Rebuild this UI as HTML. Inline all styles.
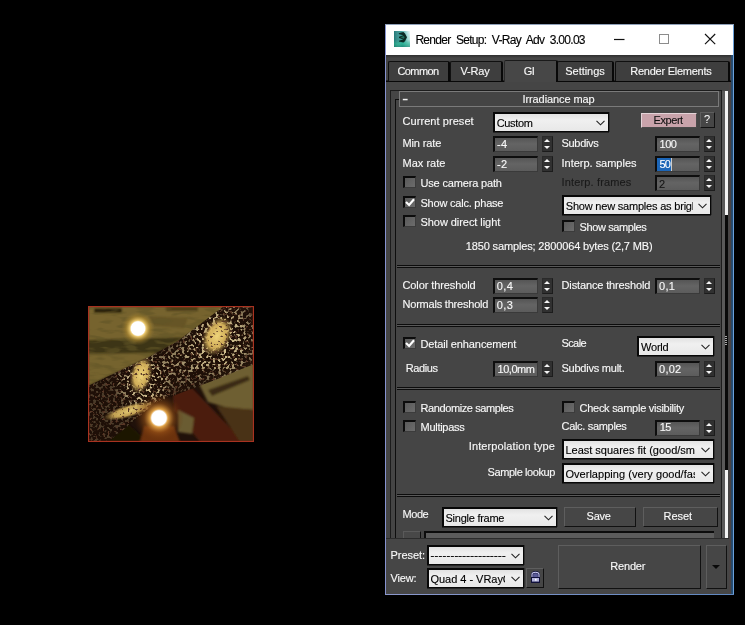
<!DOCTYPE html>
<html><head><meta charset="utf-8"><title>Render Setup: V-Ray Adv 3.00.03</title>
<style>
html,body{margin:0;padding:0;background:#000;}
body{width:745px;height:625px;position:relative;overflow:hidden;font-family:"Liberation Sans",sans-serif;}
.a{position:absolute;box-sizing:border-box;}
.t{position:absolute;white-space:nowrap;line-height:20px;height:20px;-webkit-text-stroke:0.13px currentColor;}
#txt{position:absolute;left:0;top:0;width:745px;height:625px;will-change:transform;}
#win{left:385px;top:24px;width:349px;height:571px;background:#454545;}
#title{left:386px;top:25px;width:347px;height:30px;background:#fff;}
.fld{width:45px;height:16px;background:linear-gradient(#555,#646464 45%,#5c5c5c);border:1px solid #3a3a3a;border-top:2px solid #0e0e0e;border-left:2px solid #0e0e0e;}
.spn{width:11px;height:16px;background:#303030;border:1px solid #2a2a2a;border-right-color:#1c1c1c;border-bottom-color:#1c1c1c;}
.spn:before{content:"";position:absolute;left:0.5px;top:2px;border:3px solid transparent;border-top:none;border-bottom:3px solid #f4f4f4;width:0;height:0;}
.spn:after{content:"";position:absolute;left:0.5px;top:9px;border:3px solid transparent;border-bottom:none;border-top:3px solid #f4f4f4;width:0;height:0;}
.dd{background:linear-gradient(#e2e2e2,#f0f0f0 35%,#e8e8e8);border:solid #080808;border-width:2px 1px 1px 2px;box-shadow:0 1px 0 rgba(0,0,0,.45),1px 0 0 rgba(0,0,0,.3);}
.dd svg{position:absolute;right:3px;top:50%;margin-top:-2.5px;}
.cb{width:13px;height:12px;background:linear-gradient(135deg,#5a5a5a,#6c6c6c);border:1px solid #3c3c3c;border-top:2px solid #0c0c0c;border-left:2px solid #0c0c0c;}
.btn{background:#464646;border:1px solid #111;border-top-color:#5e5e5e;border-left-color:#5e5e5e;}
.sep{height:3px;border-top:1px solid #0c0c0c;border-bottom:1px solid #0c0c0c;background:#585858;left:397px;width:323px;}
.tab{background:#3e3e3e;border:1px solid #101010;border-right:2px solid #080808;border-bottom:none;border-radius:2px 2px 0 0;top:61px;height:20px;}
</style></head><body>
<svg class="a" style="left:88px;top:306px" width="166" height="136" viewBox="0 0 166 136">
<defs>
<filter id="b2" x="-20%" y="-20%" width="140%" height="140%"><feGaussianBlur stdDeviation="1.3"/></filter>
<filter id="b3" x="-30%" y="-30%" width="160%" height="160%"><feGaussianBlur stdDeviation="2.5"/></filter>
<filter id="spk" x="0" y="0" width="100%" height="100%">
<feTurbulence type="fractalNoise" baseFrequency="0.36" numOctaves="1" seed="7" result="n"/>
<feColorMatrix in="n" type="matrix" values="0 0 0 0 0.72  0 0 0 0 0.60  0 0 0 0 0.32  12 0 0 0 -6.3"/>
</filter>
<filter id="spd" x="0" y="0" width="100%" height="100%">
<feTurbulence type="fractalNoise" baseFrequency="0.4" numOctaves="1" seed="23" result="n"/>
<feColorMatrix in="n" type="matrix" values="0 0 0 0 0.10  0 0 0 0 0.04  0 0 0 0 0.02  12 0 0 0 -7.4"/>
</filter>
<filter id="tex" x="0" y="0" width="100%" height="100%">
<feTurbulence type="fractalNoise" baseFrequency="0.06 0.22" numOctaves="2" seed="4" result="n"/>
<feColorMatrix in="n" type="matrix" values="0 0 0 0 0.12  0 0 0 0 0.09  0 0 0 0 0.02  5 0 0 0 -2.4"/>
</filter>
<radialGradient id="g1"><stop offset="0" stop-color="#fff"/><stop offset="0.4" stop-color="#fff"/><stop offset="0.48" stop-color="#f0cc70" stop-opacity="0.95"/><stop offset="0.72" stop-color="#b08a30" stop-opacity="0.55"/><stop offset="1" stop-color="#8a7030" stop-opacity="0"/></radialGradient>
<radialGradient id="g2"><stop offset="0" stop-color="#fff"/><stop offset="0.29" stop-color="#fff"/><stop offset="0.36" stop-color="#e8a848" stop-opacity="0.95"/><stop offset="0.6" stop-color="#9a5418" stop-opacity="0.55"/><stop offset="1" stop-color="#5a2808" stop-opacity="0"/></radialGradient>
<radialGradient id="gy"><stop offset="0" stop-color="#efd47a"/><stop offset="0.6" stop-color="#d8b45c" stop-opacity="0.95"/><stop offset="1" stop-color="#a08040" stop-opacity="0"/></radialGradient>
<radialGradient id="mg"><stop offset="0" stop-color="#fff"/><stop offset="0.5" stop-color="#fff" stop-opacity="0.8"/><stop offset="1" stop-color="#fff" stop-opacity="0"/></radialGradient>
<mask id="spm" maskUnits="userSpaceOnUse" x="0" y="0" width="166" height="136"><rect width="166" height="136" fill="#3c3c3c"/><ellipse cx="132" cy="34" rx="44" ry="48" fill="url(#mg)"/><ellipse cx="56" cy="76" rx="32" ry="36" fill="url(#mg)"/><ellipse cx="96" cy="58" rx="30" ry="26" fill="url(#mg)" opacity="0.6"/></mask>
<clipPath id="topc"><path d="M0 0 H140 L90 36 L60 52 L28 67 L0 80 Z"/></clipPath>
<clipPath id="ic"><rect x="0" y="0" width="166" height="136"/></clipPath>
<clipPath id="beam"><path d="M136 0 L166 0 L166 58 L127 74 L90 88 L66 98 L40 120 L20 136 L0 136 L0 80 L29 66 L61 51 L90 35 Z"/></clipPath>
</defs>
<g clip-path="url(#ic)">
<rect width="166" height="136" fill="#20110a"/>
<g filter="url(#b2)">
<!-- upper olive -->
<path d="M0 0 H140 L90 36 L60 52 L28 67 L0 80 Z" fill="#76642e"/>
<path d="M0 34 L96 31 L70 47 L0 48 Z" fill="#3d3612"/>
<path d="M6 2 H34 V7 H6 Z" fill="#2a200a"/>
<path d="M78 1 H110 V5 H78 Z" fill="#4a3a14"/>
<path d="M60 10 L100 12 L96 22 L66 20 Z" fill="#665426"/>
<path d="M0 50 L40 50 L30 66 L0 78 Z" fill="#74642f"/>
<!-- lower left dark -->
<path d="M0 110 L40 118 L60 136 L0 136 Z" fill="#1c1406"/>
<!-- beam 2 reddish -->
<path d="M84 78 L104 82 L156 136 L112 136 L86 104 Z" fill="#4c1e0c"/>
<!-- right olive -->
<path d="M110 76 L166 54 L166 104 L140 102 L120 96 Z" fill="#6e5f32"/>
<path d="M128 100 L166 104 L166 136 L152 136 Z" fill="#4a3012"/>
<path d="M120 84 L160 70 L162 74 L124 90 Z" fill="#3a2c12"/>
<!-- small olive bottom -->
<path d="M90 104 L106 112 L104 128 L90 126 Z" fill="#6a5c30"/>
<!-- orange below light -->
<path d="M56 120 L86 120 L92 136 L52 136 Z" fill="#6c300e"/>
</g>
<g clip-path="url(#topc)"><rect width="166" height="136" filter="url(#tex)" opacity="0.6"/></g>
<!-- speckled beam -->
<g clip-path="url(#beam)">
<rect width="166" height="136" fill="#1e0f07" opacity="0.93"/>
<g mask="url(#spm)"><rect width="166" height="136" filter="url(#spk)"/></g>
<ellipse cx="129" cy="30" rx="14" ry="21" fill="url(#gy)" transform="rotate(26 129 30)"/>
<ellipse cx="53" cy="69" rx="11" ry="19" fill="url(#gy)" transform="rotate(14 53 69)"/>
<ellipse cx="41" cy="105" rx="27" ry="6.5" fill="url(#gy)" transform="rotate(-16 41 105)" opacity="0.92"/>
<rect width="166" height="136" filter="url(#spd)"/>
</g>
<!-- lights -->
<circle cx="50" cy="22.5" r="17" fill="url(#g1)"/>
<circle cx="71" cy="112" r="25" fill="url(#g2)"/>
</g>
<rect x="0.5" y="0.5" width="165" height="135" fill="none" stroke="#a83220" stroke-width="1.3"/>
</svg>

<div class="a" id="win"></div>
<!-- window borders -->
<div class="a" style="left:385px;top:24px;width:1px;height:571px;background:#8592cf"></div>
<div class="a" style="left:729px;top:55px;width:2px;height:539px;background:#4a4444"></div>
<div class="a" style="left:731px;top:24px;width:2px;height:571px;background:linear-gradient(90deg,#2c4660,#23517e)"></div>
<div class="a" style="left:733px;top:24px;width:1px;height:571px;background:#6ba0d8"></div>
<div class="a" style="left:385px;top:594px;width:349px;height:1px;background:linear-gradient(90deg,#8c98cc,#5f88c0)"></div>
<div class="a" id="title"></div>
<div class="a" style="left:385px;top:24px;width:349px;height:1px;background:#8fa0b8"></div>
<!-- icon -->
<svg class="a" style="left:394px;top:31px" width="16" height="16" viewBox="0 0 16 16">
<defs><linearGradient id="ig" x1="0" y1="0.2" x2="1" y2="0"><stop offset="0" stop-color="#2a7c84"/><stop offset="0.45" stop-color="#3c9c98"/><stop offset="0.8" stop-color="#a8dcdc"/><stop offset="1" stop-color="#e8f6f6"/></linearGradient>
<linearGradient id="ig2" x1="0" y1="0" x2="0" y2="1"><stop offset="0" stop-color="#20a888" stop-opacity="0"/><stop offset="0.55" stop-color="#20a888" stop-opacity="0.15"/><stop offset="0.8" stop-color="#28b494" stop-opacity="0.9"/><stop offset="1" stop-color="#1c8c78" stop-opacity="0.95"/></linearGradient>
<linearGradient id="ig3" x1="0" y1="0" x2="1" y2="0"><stop offset="0" stop-color="#106858" stop-opacity="0.7"/><stop offset="0.5" stop-color="#fff" stop-opacity="0"/><stop offset="1" stop-color="#fff" stop-opacity="0.45"/></linearGradient></defs>
<rect width="16" height="16" fill="url(#ig)"/>
<rect width="16" height="16" fill="url(#ig2)"/>
<rect y="0" width="16" height="16" fill="url(#ig3)" opacity="0.45"/>
<path d="M4.6 2.2 L9.4 1 L11 2.4 L13 6.3 L11 10.2 L9.4 11.6 L4.8 10.4 L5.4 9.4 L9.2 8.6 L5 6.9 L5 5.8 L9.2 4.2 L5.2 3.2 Z" fill="#0a2a24"/>
<path d="M6.4 6.3 L9.6 5 L10.6 6.3 L9.6 7.7 Z" fill="#1c6c58"/>
</svg>
<!-- window controls -->
<svg class="a" style="left:600px;top:25px" width="133" height="30" viewBox="0 0 133 30">
<path d="M14 14.5 H24.5" stroke="#111" stroke-width="1.2" fill="none"/>
<rect x="59.5" y="9.5" width="9" height="9" stroke="#8c8c8c" stroke-width="1" fill="none"/>
<path d="M105 9 L115.2 19.2 M115.2 9 L105 19.2" stroke="#111" stroke-width="1.15" fill="none"/>
</svg>
<!-- dark strip below title -->
<div class="a" style="left:386px;top:55px;width:345px;height:3px;background:linear-gradient(#2e2e2e,#454545)"></div>
<!-- tabs -->
<div class="a" style="left:386px;top:80px;width:345px;height:2px;background:linear-gradient(#262626 50%,#080808 50%)"></div>
<div class="a tab" style="left:388px;width:62px"></div>
<div class="a tab" style="left:450px;width:53px"></div>
<div class="a tab" style="left:557px;width:57px"></div>
<div class="a tab" style="left:615px;width:115px"></div>
<div class="a tab" style="left:504px;width:54px;top:60px;height:22px;background:#474747;border-top-color:#1a1a1a;border-left-color:#2a2a2a"></div>
<!-- panel frame -->
<div class="a" style="left:390px;top:90px;width:332px;height:450px;border:1px solid #1c1c1c;border-bottom:none;"></div>
<div class="a" style="left:395px;top:99px;width:1px;height:441px;background:#0e0e0e"></div>
<div class="a" style="left:395px;top:99px;width:4px;height:1px;background:#0e0e0e"></div>
<!-- rollout header -->
<div class="a" style="left:399px;top:91px;width:320px;height:16px;border:1px solid #7a7a7a;background:#444"></div>
<svg class="a" style="left:400px;top:95px" width="12" height="10"><rect x="2.8" y="3.8" width="4.8" height="1.5" fill="#f0f0f0"/></svg>
<!-- scroll strip -->
<div class="a" style="left:722px;top:91px;width:3px;height:449px;background:#5a5a5a"></div>
<div class="a" style="left:725px;top:91px;width:3px;height:449px;background:#0a0a0a"></div>
<div class="a" style="left:725px;top:91px;width:3px;height:124px;background:#f4f4f4"></div>
<div class="a" style="left:725px;top:470px;width:3px;height:69px;background:#f4f4f4"></div>
<div class="a" style="left:725px;top:336px;width:2px;height:1px;background:#a8a8a8"></div><div class="a" style="left:725px;top:338px;width:2px;height:1px;background:#a8a8a8"></div><div class="a" style="left:725px;top:340px;width:2px;height:1px;background:#a8a8a8"></div><div class="a" style="left:725px;top:342px;width:2px;height:1px;background:#a8a8a8"></div><div class="a" style="left:725px;top:344px;width:2px;height:1px;background:#a8a8a8"></div>
<!-- row1 -->
<div class="a dd" style="left:493px;top:112px;width:116px;height:20px"><svg width="9" height="6" viewBox="0 0 9 6"><path d="M0.5 0.8 L4.5 4.8 L8.5 0.8" stroke="#222" stroke-width="1.1" fill="none"/></svg></div>
<div class="a" style="left:641px;top:113px;width:56px;height:15px;background:#c9a3ab;border:1px solid #e4d4d8;border-right-color:#4a4a4a;border-bottom-color:#4a4a4a"></div>
<div class="a btn" style="left:700px;top:112px;width:15px;height:16px"></div>
<!-- spinners rows -->
<div class="a fld" style="left:493px;top:136px"></div><div class="a spn" style="left:542px;top:136px"></div>
<div class="a fld" style="left:493px;top:156px"></div><div class="a spn" style="left:542px;top:156px"></div>
<div class="a fld" style="left:655px;top:136px"></div><div class="a spn" style="left:704px;top:136px"></div>
<div class="a fld" style="left:655px;top:156px"></div><div class="a spn" style="left:704px;top:156px"></div>
<div class="a" style="left:657px;top:158px;width:14px;height:13px;background:#1c66b8"></div>
<div class="a" style="left:671px;top:158px;width:1px;height:13px;background:#ccc"></div>
<div class="a fld" style="left:655px;top:175px"></div><div class="a spn" style="left:704px;top:175px"></div>
<!-- checkboxes -->
<div class="a cb" style="left:403px;top:176px"></div>
<div class="a cb" style="left:403px;top:196px"></div>
<svg class="a" style="left:403px;top:196px" width="13" height="12" viewBox="0 0 13 12"><path d="M3 5.9 L6.1 9 L11 3.2" stroke="#fff" stroke-width="2.1" fill="none"/></svg>
<div class="a cb" style="left:403px;top:215px"></div>
<div class="a cb" style="left:562px;top:220px"></div>
<div class="a dd" style="left:562px;top:195px;width:149px;height:20px"><svg width="9" height="6" viewBox="0 0 9 6"><path d="M0.5 0.8 L4.5 4.8 L8.5 0.8" stroke="#222" stroke-width="1.1" fill="none"/></svg></div>
<div class="a sep" style="top:265px"></div>
<!-- thresholds -->
<div class="a fld" style="left:493px;top:278px"></div><div class="a spn" style="left:542px;top:278px"></div>
<div class="a fld" style="left:655px;top:278px"></div><div class="a spn" style="left:704px;top:278px"></div>
<div class="a fld" style="left:493px;top:297px"></div><div class="a spn" style="left:542px;top:297px"></div>
<div class="a sep" style="top:324px"></div>
<!-- detail enhancement -->
<div class="a cb" style="left:403px;top:337px"></div>
<svg class="a" style="left:403px;top:337px" width="13" height="12" viewBox="0 0 13 12"><path d="M3 5.9 L6.1 9 L11 3.2" stroke="#fff" stroke-width="2.1" fill="none"/></svg>
<div class="a dd" style="left:637px;top:336px;width:77px;height:20px"><svg width="9" height="6" viewBox="0 0 9 6"><path d="M0.5 0.8 L4.5 4.8 L8.5 0.8" stroke="#222" stroke-width="1.1" fill="none"/></svg></div>
<div class="a fld" style="left:493px;top:361px"></div><div class="a spn" style="left:542px;top:361px"></div>
<div class="a fld" style="left:655px;top:361px"></div><div class="a spn" style="left:704px;top:361px"></div>
<div class="a sep" style="top:387px"></div>
<!-- options -->
<div class="a cb" style="left:403px;top:401px"></div>
<div class="a cb" style="left:562px;top:401px"></div>
<div class="a cb" style="left:403px;top:420px"></div>
<div class="a fld" style="left:655px;top:420px"></div><div class="a spn" style="left:704px;top:420px"></div>
<div class="a dd" style="left:562px;top:439px;width:152px;height:20px"><svg width="9" height="6" viewBox="0 0 9 6"><path d="M0.5 0.8 L4.5 4.8 L8.5 0.8" stroke="#222" stroke-width="1.1" fill="none"/></svg></div>
<div class="a dd" style="left:562px;top:463px;width:152px;height:20px"><svg width="9" height="6" viewBox="0 0 9 6"><path d="M0.5 0.8 L4.5 4.8 L8.5 0.8" stroke="#222" stroke-width="1.1" fill="none"/></svg></div>
<div class="a sep" style="top:494px"></div>
<!-- mode -->
<div class="a dd" style="left:442px;top:507px;width:115px;height:20px"><svg width="9" height="6" viewBox="0 0 9 6"><path d="M0.5 0.8 L4.5 4.8 L8.5 0.8" stroke="#222" stroke-width="1.1" fill="none"/></svg></div>
<div class="a btn" style="left:564px;top:507px;width:72px;height:20px"></div>
<div class="a btn" style="left:643px;top:507px;width:75px;height:20px"></div>
<div class="a" style="left:403px;top:531px;width:18px;height:9px;background:#484848;border:1px solid #5a5a5a;border-right:1px solid #111;border-bottom:none"></div>
<div class="a" style="left:424px;top:531px;width:290px;height:9px;background:#5c5c5c;border-top:2px solid #0c0c0c;border-left:2px solid #0c0c0c"></div>
<!-- bottom bar -->
<div class="a" style="left:386px;top:538px;width:343px;height:56px;background:#464646;border-top:1px solid #2c2c2c"></div>
<div class="a dd" style="left:427px;top:545px;width:97px;height:20px"><svg width="9" height="6" viewBox="0 0 9 6"><path d="M0.5 0.8 L4.5 4.8 L8.5 0.8" stroke="#222" stroke-width="1.1" fill="none"/></svg></div>
<div class="a dd" style="left:427px;top:568px;width:97px;height:20px"><svg width="9" height="6" viewBox="0 0 9 6"><path d="M0.5 0.8 L4.5 4.8 L8.5 0.8" stroke="#222" stroke-width="1.1" fill="none"/></svg></div>
<div class="a btn" style="left:526px;top:568px;width:18px;height:20px"></div>
<svg class="a" style="left:530px;top:571px" width="11" height="13" viewBox="0 0 11 13"><path d="M2 6 V3.6 Q2 1.2 5.5 1.2 Q9 1.2 9 3.6 V6" stroke="#10103a" stroke-width="2.2" fill="#5a5a98"/><path d="M2 6 V3.6 Q2 1.3 5.5 1.3 Q9 1.3 9 3.6 V6" stroke="#ccccf2" stroke-width="1.1" fill="none"/><rect x="1" y="6" width="9" height="6" fill="#10103a"/><rect x="2" y="7" width="7" height="3.6" fill="#b4b4dc"/><rect x="5" y="7.8" width="1.6" height="1.8" fill="#fff"/></svg>
<div class="a btn" style="left:558px;top:545px;width:143px;height:44px"></div>
<div class="a btn" style="left:706px;top:545px;width:21px;height:44px"></div>
<div class="a" style="left:711.5px;top:565px;width:0;height:0;border:4px solid transparent;border-bottom:none;border-top:4.4px solid #0a0a0a"></div>
<div id="txt">
<span class="t" id="t0" style="left:415.40px;top:29.59px;font-size:12px;color:#000;letter-spacing:-0.720px;-webkit-text-stroke-width:0.12px;word-spacing:2.9px;">Render Setup: V-Ray Adv 3.00.03</span>
<span class="t" id="t1" style="left:397.50px;top:61.19px;font-size:11px;color:#f8f8f8;letter-spacing:-0.604px;">Common</span>
<span class="t" id="t2" style="left:460.50px;top:61.19px;font-size:11px;color:#f8f8f8;letter-spacing:-0.194px;">V-Ray</span>
<span class="t" id="t3" style="left:523.75px;top:61.19px;font-size:11px;color:#f8f8f8;letter-spacing:-0.438px;">GI</span>
<span class="t" id="t4" style="left:565.25px;top:61.19px;font-size:11px;color:#f8f8f8;letter-spacing:-0.031px;">Settings</span>
<span class="t" id="t5" style="left:630.25px;top:61.19px;font-size:11px;color:#f8f8f8;letter-spacing:-0.250px;">Render Elements</span>
<span class="t" id="t6" style="left:522.50px;top:89.19px;font-size:11px;color:#f8f8f8;letter-spacing:-0.098px;">Irradiance map</span>
<span class="t" id="t7" style="left:402.50px;top:111.19px;font-size:11px;color:#f8f8f8;letter-spacing:0.067px;">Current preset</span>
<span class="t" id="t8" style="left:496.75px;top:113.19px;font-size:11px;color:#000;letter-spacing:-0.359px;">Custom</span>
<span class="t" id="t9" style="left:653.50px;top:109.94px;font-size:11px;color:#111;letter-spacing:-0.424px;">Expert</span>
<span class="t" id="t10" style="left:704.00px;top:109.39px;font-size:11px;color:#f8f8f8;letter-spacing:-1.525px;-webkit-text-stroke-width:0.05px;">?</span>
<span class="t" id="t11" style="left:402.50px;top:133.19px;font-size:11px;color:#f8f8f8;letter-spacing:-0.125px;">Min rate</span>
<span class="t" id="t12" style="left:497.00px;top:133.69px;font-size:11px;color:#f8f8f8;letter-spacing:0.359px;">-4</span>
<span class="t" id="t13" style="left:561.50px;top:133.19px;font-size:11px;color:#f8f8f8;letter-spacing:-0.306px;">Subdivs</span>
<span class="t" id="t14" style="left:659.50px;top:134.19px;font-size:11px;color:#f8f8f8;letter-spacing:-0.453px;">100</span>
<span class="t" id="t15" style="left:402.50px;top:153.19px;font-size:11px;color:#f8f8f8;letter-spacing:0.025px;">Max rate</span>
<span class="t" id="t16" style="left:497.00px;top:153.69px;font-size:11px;color:#f8f8f8;letter-spacing:0.359px;">-2</span>
<span class="t" id="t17" style="left:561.50px;top:153.19px;font-size:11px;color:#f8f8f8;letter-spacing:-0.014px;">Interp. samples</span>
<span class="t" id="t18" style="left:659.50px;top:154.19px;font-size:11px;color:#fff;letter-spacing:-0.750px;">50</span>
<span class="t" id="t19" style="left:420.50px;top:173.19px;font-size:11px;color:#f8f8f8;letter-spacing:-0.168px;">Use camera path</span>
<span class="t" id="t20" style="left:561.50px;top:171.89px;font-size:11px;color:#1a1a1a;letter-spacing:0.153px;-webkit-text-stroke-width:0.1px;">Interp. frames</span>
<span class="t" id="t21" style="left:659.00px;top:173.79px;font-size:11px;color:#141414;letter-spacing:-0.625px;-webkit-text-stroke-width:0.1px;">2</span>
<span class="t" id="t22" style="left:420.50px;top:193.19px;font-size:11px;color:#f8f8f8;letter-spacing:-0.217px;">Show calc. phase</span>
<span class="t" id="t23" style="left:565.75px;top:196.19px;font-size:11px;color:#000;letter-spacing:-0.200px;width:127.5px;overflow:hidden;">Show new samples as bright</span>
<span class="t" id="t24" style="left:420.50px;top:212.44px;font-size:11px;color:#f8f8f8;letter-spacing:-0.057px;">Show direct light</span>
<span class="t" id="t25" style="left:579.50px;top:217.44px;font-size:11px;color:#f8f8f8;letter-spacing:-0.379px;">Show samples</span>
<span class="t" id="t26" style="left:465.80px;top:236.19px;font-size:11px;color:#f8f8f8;letter-spacing:-0.148px;">1850 samples; 2800064 bytes (2,7 MB)</span>
<span class="t" id="t27" style="left:402.50px;top:275.09px;font-size:11px;color:#f8f8f8;letter-spacing:-0.106px;">Color threshold</span>
<span class="t" id="t28" style="left:496.75px;top:276.19px;font-size:11px;color:#f8f8f8;letter-spacing:0.401px;">0,4</span>
<span class="t" id="t29" style="left:561.50px;top:274.99px;font-size:11px;color:#f8f8f8;letter-spacing:-0.131px;">Distance threshold</span>
<span class="t" id="t30" style="left:659.00px;top:276.19px;font-size:11px;color:#f8f8f8;letter-spacing:0.318px;">0,1</span>
<span class="t" id="t31" style="left:402.50px;top:294.19px;font-size:11px;color:#f8f8f8;letter-spacing:-0.207px;">Normals threshold</span>
<span class="t" id="t32" style="left:496.75px;top:294.94px;font-size:11px;color:#f8f8f8;letter-spacing:0.401px;">0,3</span>
<span class="t" id="t33" style="left:420.50px;top:334.19px;font-size:11px;color:#f8f8f8;letter-spacing:-0.116px;">Detail enhancement</span>
<span class="t" id="t34" style="left:561.50px;top:333.19px;font-size:11px;color:#f8f8f8;letter-spacing:-0.606px;">Scale</span>
<span class="t" id="t35" style="left:641.00px;top:336.94px;font-size:11px;color:#000;letter-spacing:-0.206px;">World</span>
<span class="t" id="t36" style="left:405.75px;top:358.19px;font-size:11px;color:#f8f8f8;letter-spacing:-0.417px;">Radius</span>
<span class="t" id="t37" style="left:497.50px;top:359.44px;font-size:11px;color:#f8f8f8;letter-spacing:-0.458px;">10,0mm</span>
<span class="t" id="t38" style="left:561.50px;top:358.19px;font-size:11px;color:#f8f8f8;letter-spacing:-0.233px;">Subdivs mult.</span>
<span class="t" id="t39" style="left:659.00px;top:359.19px;font-size:11px;color:#f8f8f8;letter-spacing:0.270px;">0,02</span>
<span class="t" id="t40" style="left:420.50px;top:397.79px;font-size:11px;color:#f8f8f8;letter-spacing:-0.406px;">Randomize samples</span>
<span class="t" id="t41" style="left:579.50px;top:398.19px;font-size:11px;color:#f8f8f8;letter-spacing:-0.268px;">Check sample visibility</span>
<span class="t" id="t42" style="left:420.50px;top:416.94px;font-size:11px;color:#f8f8f8;letter-spacing:-0.274px;">Multipass</span>
<span class="t" id="t43" style="left:561.50px;top:416.19px;font-size:11px;color:#f8f8f8;letter-spacing:-0.314px;">Calc. samples</span>
<span class="t" id="t44" style="left:659.75px;top:417.44px;font-size:11px;color:#f8f8f8;letter-spacing:-0.625px;">15</span>
<span class="t" id="t45" style="left:468.75px;top:436.19px;font-size:11px;color:#f8f8f8;letter-spacing:0.103px;">Interpolation type</span>
<span class="t" id="t46" style="left:565.40px;top:440.19px;font-size:11px;color:#000;letter-spacing:0.000px;width:129.3px;overflow:hidden;">Least squares fit (good/smooth)</span>
<span class="t" id="t47" style="left:487.50px;top:462.19px;font-size:11px;color:#f8f8f8;letter-spacing:-0.406px;">Sample lookup</span>
<span class="t" id="t48" style="left:565.40px;top:464.19px;font-size:11px;color:#000;letter-spacing:0.040px;width:129.3px;overflow:hidden;">Overlapping (very good/fast)</span>
<span class="t" id="t49" style="left:402.50px;top:504.19px;font-size:11px;color:#f8f8f8;letter-spacing:-0.445px;">Mode</span>
<span class="t" id="t50" style="left:445.50px;top:508.19px;font-size:11px;color:#000;letter-spacing:-0.251px;">Single frame</span>
<span class="t" id="t51" style="left:586.50px;top:506.19px;font-size:11px;color:#f8f8f8;letter-spacing:-0.207px;">Save</span>
<span class="t" id="t52" style="left:663.50px;top:506.19px;font-size:11px;color:#f8f8f8;letter-spacing:-0.050px;">Reset</span>
<span class="t" id="t53" style="left:390.50px;top:544.94px;font-size:11px;color:#f8f8f8;letter-spacing:-0.051px;">Preset:</span>
<span class="t" id="t54" style="left:430.60px;top:544.99px;font-size:11px;color:#000;letter-spacing:0.305px;-webkit-text-stroke-width:0.3px;">-------------------</span>
<span class="t" id="t55" style="left:390.50px;top:567.94px;font-size:11px;color:#f8f8f8;letter-spacing:-0.191px;">View:</span>
<span class="t" id="t56" style="left:430.50px;top:569.29px;font-size:11px;color:#000;letter-spacing:-0.030px;width:74.6px;overflow:hidden;">Quad 4 - VRayCam</span>
<span class="t" id="t57" style="left:610.25px;top:556.19px;font-size:11px;color:#f8f8f8;letter-spacing:-0.180px;">Render</span>
</div>
</body></html>
